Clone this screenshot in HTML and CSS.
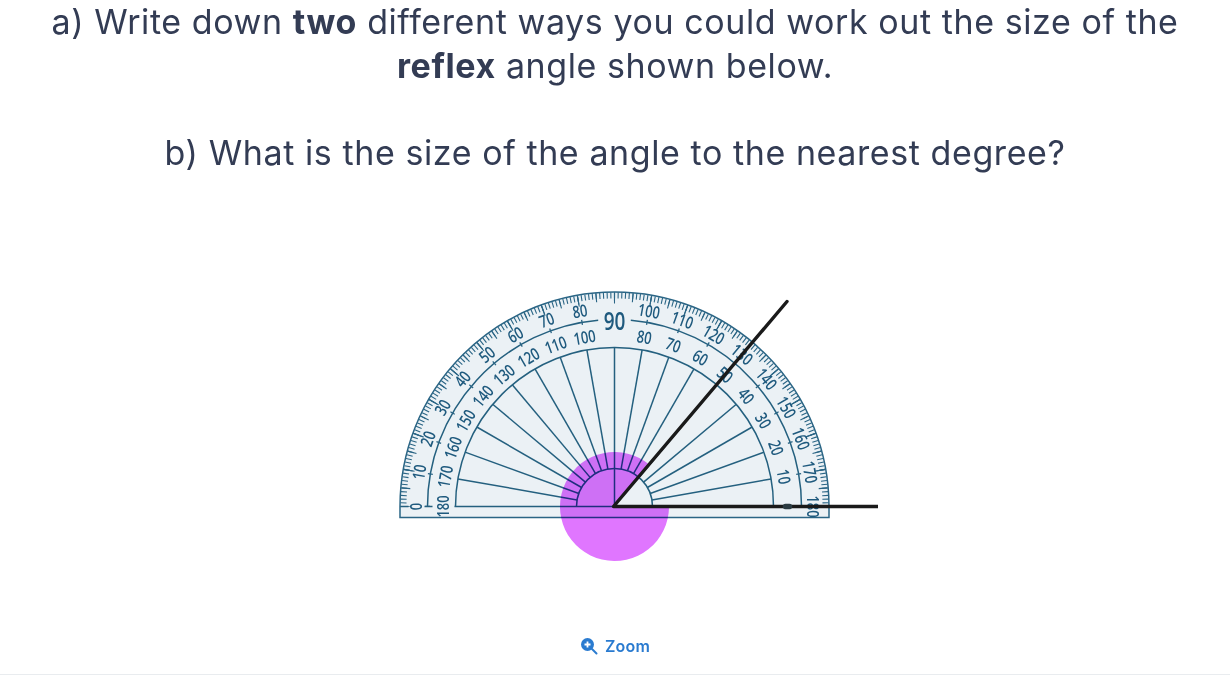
FILE: index.html
```html
<!DOCTYPE html>
<html lang="en">
<head>
<meta charset="utf-8">
<title>Reflex angle question</title>
<link rel="stylesheet" href="styles.css">
</head>
<body>
<main class="question">
  <div class="prompt">
    <p>a) Write down <strong>two</strong> different ways you could work out the size of the <strong>reflex</strong> angle shown below.</p>
    <p class="part-b">b) What is the size of the angle to the nearest degree?</p>
  </div>
  <figure class="figure">
    <svg class="protractor" width="526" height="285" viewBox="0 0 526 285" role="img" aria-label="Protractor measuring a reflex angle">
      <g transform="translate(262.5 221.5)">
        <path class="body" d="M-214.5 11V0A214.5 214.5 0 0 1 214.5 0V11Z"/>
        <path class="tick tick-1" pathLength="180" d="M-211 0A211 211 0 0 1 211 0"/>
        <path class="tick tick-5" pathLength="180" d="M-209.5 0A209.5 209.5 0 0 1 209.5 0"/>
        <path class="tick tick-10" pathLength="180" d="M-208.5 0A208.5 208.5 0 0 1 208.5 0"/>
        <path class="rule" d="M-187 0A187 187 0 0 1 -16.3 -186.3M16.3 -186.3A187 187 0 0 1 187 0"/>
        <path class="tick tick-mid" pathLength="85" d="M-187 0A187 187 0 0 1 -16.3 -186.3"/>
        <path class="tick tick-mid-r" pathLength="85" d="M16.3 -186.3A187 187 0 0 1 187 0"/>
        <path class="rule" d="M-159 0A159 159 0 0 1 159 0M-38 0A38 38 0 0 1 38 0"/>
        <path class="rule" d="M-214 0H-206M-190 0H-182M-160 0H214M0 0V-159"/>
        <g class="spokes">
          <line x1="-38" x2="-159" transform="rotate(10)"/>
          <line x1="-38" x2="-159" transform="rotate(20)"/>
          <line x1="-38" x2="-159" transform="rotate(30)"/>
          <line x1="-38" x2="-159" transform="rotate(40)"/>
          <line x1="-38" x2="-159" transform="rotate(50)"/>
          <line x1="-38" x2="-159" transform="rotate(60)"/>
          <line x1="-38" x2="-159" transform="rotate(70)"/>
          <line x1="-38" x2="-159" transform="rotate(80)"/>
          <line x1="-38" x2="-159" transform="rotate(100)"/>
          <line x1="-38" x2="-159" transform="rotate(110)"/>
          <line x1="-38" x2="-159" transform="rotate(120)"/>
          <line x1="-38" x2="-159" transform="rotate(130)"/>
          <line x1="-38" x2="-159" transform="rotate(140)"/>
          <line x1="-38" x2="-159" transform="rotate(150)"/>
          <line x1="-38" x2="-159" transform="rotate(160)"/>
          <line x1="-38" x2="-159" transform="rotate(170)"/>
        </g>
        <g class="labels">
          <text transform="rotate(-90) translate(0 -199) scale(.76 1)">0</text>
          <text transform="rotate(-80) translate(0 -199) scale(.76 1)">10</text>
          <text transform="rotate(-70) translate(0 -199) scale(.76 1)">20</text>
          <text transform="rotate(-60) translate(0 -199) scale(.76 1)">30</text>
          <text transform="rotate(-50) translate(0 -199) scale(.76 1)">40</text>
          <text transform="rotate(-40) translate(0 -199) scale(.76 1)">50</text>
          <text transform="rotate(-30) translate(0 -199) scale(.76 1)">60</text>
          <text transform="rotate(-20) translate(0 -199) scale(.76 1)">70</text>
          <text transform="rotate(-10) translate(0 -199) scale(.76 1)">80</text>
          <text transform="rotate(10) translate(0 -199) scale(.76 1)">100</text>
          <text transform="rotate(20) translate(0 -199) scale(.76 1)">110</text>
          <text transform="rotate(30) translate(0 -199) scale(.76 1)">120</text>
          <text transform="rotate(40) translate(0 -199) scale(.76 1)">130</text>
          <text transform="rotate(50) translate(0 -199) scale(.76 1)">140</text>
          <text transform="rotate(60) translate(0 -199) scale(.76 1)">150</text>
          <text transform="rotate(70) translate(0 -199) scale(.76 1)">160</text>
          <text transform="rotate(80) translate(0 -199) scale(.76 1)">170</text>
          <text transform="rotate(90) translate(0 -199) scale(.76 1)">180</text>
          <text transform="rotate(-90) translate(0 -172.5) scale(.76 1)">180</text>
          <text transform="rotate(-80) translate(0 -172.5) scale(.76 1)">170</text>
          <text transform="rotate(-70) translate(0 -172.5) scale(.76 1)">160</text>
          <text transform="rotate(-60) translate(0 -172.5) scale(.76 1)">150</text>
          <text transform="rotate(-50) translate(0 -172.5) scale(.76 1)">140</text>
          <text transform="rotate(-40) translate(0 -172.5) scale(.76 1)">130</text>
          <text transform="rotate(-30) translate(0 -172.5) scale(.76 1)">120</text>
          <text transform="rotate(-20) translate(0 -172.5) scale(.76 1)">110</text>
          <text transform="rotate(-10) translate(0 -172.5) scale(.76 1)">100</text>
          <text transform="rotate(10) translate(0 -172.5) scale(.76 1)">80</text>
          <text transform="rotate(20) translate(0 -172.5) scale(.76 1)">70</text>
          <text transform="rotate(30) translate(0 -172.5) scale(.76 1)">60</text>
          <text transform="rotate(40) translate(0 -172.5) scale(.76 1)">50</text>
          <text transform="rotate(50) translate(0 -172.5) scale(.76 1)">40</text>
          <text transform="rotate(60) translate(0 -172.5) scale(.76 1)">30</text>
          <text transform="rotate(70) translate(0 -172.5) scale(.76 1)">20</text>
          <text transform="rotate(80) translate(0 -172.5) scale(.76 1)">10</text>
          <text class="label-90" transform="translate(0 -186.5) scale(.76 1)">90</text>
        </g>
        <path class="sector" d="M0 0L35 -41.7A54.5 54.5 0 1 0 54.5 0Z"/>
        <path class="arm" d="M263 0H-1L172.5 -205"/>
        <path class="nub" d="M171 0H175"/>
      </g>
    </svg>
    <figcaption class="zoom">
      <svg class="zoom-icon" width="18" height="18" viewBox="0 0 18 18" aria-hidden="true">
        <circle class="zoom-lens" cx="7.5" cy="7.5" r="6.5"/>
        <path class="zoom-handle" d="M12 12L16.5 16.5"/>
        <path class="zoom-plus" d="M7.5 4.5V10.5M4.5 7.5H10.5"/>
      </svg>
      <span>Zoom</span>
    </figcaption>
  </figure>
</main>
</body>
</html>
```
FILE: styles.css
```css
html, body {
  margin: 0;
  padding: 0;
  background: #fff;
}
body {
  height: 675px;
  overflow: hidden;
  font-family: Inter, "Noto Sans", sans-serif;
}
.question {
  box-sizing: border-box;
  height: 675px;
  border-bottom: 1px solid #e9ecef;
  display: flex;
  flex-direction: column;
  align-items: center;
}
.prompt {
  width: 1180px;
  text-align: center;
  color: #333c54;
  font-size: 34px;
  letter-spacing: .58px;
  line-height: 43.5px;
}
.prompt p {
  margin: 0;
}
.prompt strong {
  font-weight: 700;
}
.part-b {
  padding-top: 43.5px;
}
.figure {
  margin: 111px 0 0;
  display: flex;
  flex-direction: column;
  align-items: center;
}
.protractor {
  display: block;
}
.body {
  fill: #ebf1f5;
  stroke: #2a6585;
  stroke-width: 1.5;
}
.rule {
  fill: none;
  stroke: #24607f;
  stroke-width: 1.5;
}
.spokes line {
  stroke: #24607f;
  stroke-width: 1.5;
}
.tick {
  fill: none;
  stroke: #2a6585;
}
.tick-1 {
  stroke-width: 6;
  stroke-dasharray: .3 .7;
  stroke-dashoffset: .15;
}
.tick-5 {
  stroke-width: 9;
  stroke-dasharray: .3 4.7;
  stroke-dashoffset: .15;
}
.tick-10 {
  stroke-width: 11;
  stroke-dasharray: .3 9.7;
  stroke-dashoffset: .15;
}
.tick-mid {
  stroke-width: 5;
  stroke-dasharray: .4 9.6;
  stroke-dashoffset: .2;
}
.tick-mid-r {
  stroke-width: 5;
  stroke-dasharray: .4 9.6;
  stroke-dashoffset: -4.8;
}
.labels text {
  fill: #1f5a7e;
  font-family: "Open Sans", "Noto Sans", sans-serif;
  font-size: 17px;
  font-weight: 600;
  text-anchor: middle;
  dominant-baseline: central;
}
.labels .label-90 {
  font-size: 25px;
  font-weight: 600;
}
.sector {
  fill: #e076ff;
  mix-blend-mode: multiply;
}
.arm {
  fill: none;
  stroke: #1a1a1a;
  stroke-width: 3.4;
  stroke-linecap: round;
  stroke-linejoin: round;
}
.nub {
  stroke: #2b3b42;
  stroke-width: 5.5;
  stroke-linecap: round;
}
.zoom {
  margin-top: 66px;
  display: flex;
  align-items: center;
  gap: 7px;
  color: #2a7bd0;
  font-size: 16px;
  letter-spacing: .2px;
  line-height: 20px;
  font-weight: 600;
}
.zoom-icon {
  display: block;
}
.zoom-lens {
  fill: #2a7bd0;
}
.zoom-handle {
  fill: none;
  stroke: #2a7bd0;
  stroke-width: 2;
  stroke-linecap: round;
}
.zoom-plus {
  fill: none;
  stroke: #fff;
  stroke-width: 1.8;
}
```
